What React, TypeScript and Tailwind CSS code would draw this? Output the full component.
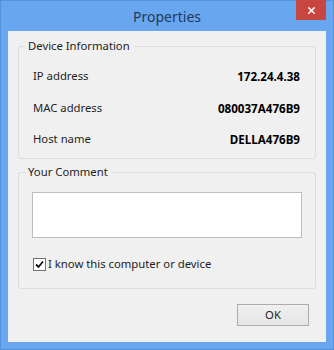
import { X } from "lucide-react";

const rows = [
  { label: "IP address", value: "172.24.4.38" },
  { label: "MAC address", value: "080037A476B9" },
  { label: "Host name", value: "DELLA476B9" },
];

const GroupBox = ({ title, className, children }: { title: string; className?: string; children: React.ReactNode }) => (
  <div className={"relative rounded-[3px] border border-[#dcdcdc] " + (className ?? "")}>
    <span className="absolute -top-[9px] left-[6px] bg-[#f0f0f0] px-[3px] leading-[16px] text-[#1e1e1e]">{title}</span>
    {children}
  </div>
);

export default function App() {
  return (
    <div
      className="flex h-[350px] w-[334px] flex-col border border-[#5592dc] bg-[#68a7ef] text-[11.3px]"
      style={{ fontFamily: '"Noto Sans", "Open Sans", sans-serif' }}
    >
      {/* title bar */}
      <div className="relative flex h-[30px] shrink-0 items-center justify-center">
        <span className="mt-[1px] text-[14px] text-[#20395a]">Properties</span>
        <button className="absolute right-[7px] top-[-1px] flex h-[20px] w-[30px] items-center justify-center bg-[#c7463f]">
          <X size={11} strokeWidth={3} color="#fff" />
        </button>
      </div>

      {/* client area */}
      <div className="mx-[7px] flex h-[311px] flex-col bg-[#f0f0f0] px-[10px] pt-[15px]">
        <GroupBox title="Device Information" className="h-[113px] px-[14px] pt-[14px]">
          {rows.map((r) => (
            <div key={r.label} className="flex h-[31.5px] items-center justify-between pr-[1px]">
              <span className="text-[#1e1e1e]">{r.label}</span>
              <span className="text-[11.6px] font-bold text-black">{r.value}</span>
            </div>
          ))}
        </GroupBox>

        <GroupBox title="Your Comment" className="mt-[13px] h-[117px] px-[13px] pt-[19px]">
          <div className="h-[46px] w-full border border-[#bdbdbd] bg-white" />
          <label className="mt-[19px] flex items-center gap-[2px] pl-[1px] text-[#1e1e1e]">
            <span className="flex h-[13px] w-[13px] items-center justify-center border border-[#707070] bg-white">
              <svg width="9" height="9" viewBox="0 0 9 9">
                <path d="M1 4.5 L3.5 7 L8 1.5" fill="none" stroke="#111" strokeWidth="1.8" />
              </svg>
            </span>
            <span className="leading-[14px]">I know this computer or device</span>
          </label>
        </GroupBox>

        <div className="mt-[15px] flex justify-end pr-[7px]">
          <button className="h-[22px] w-[72px] border border-[#acacac] bg-gradient-to-b from-[#f0f0f0] to-[#e5e5e5] text-[#1e1e1e]">
            OK
          </button>
        </div>
      </div>
    </div>
  );
}
